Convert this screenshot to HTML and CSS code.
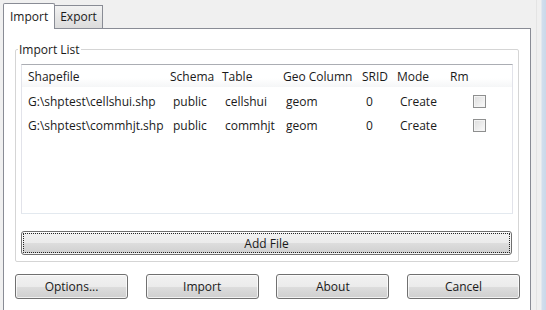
FILE: index.html
```html
<!DOCTYPE html>
<html lang="en">
<head>
  <meta charset="UTF-8">
  <title>Shapefile Import/Export</title>
  <link rel="stylesheet" href="styles.css">
</head>
<body>
  <div class="window">
    <div class="main">
      <!-- tabs -->
      <div class="tabs">
        <div class="tab active">Import</div>
        <div class="tab">Export</div>
      </div>

      <div class="pane">
        <fieldset class="group">
          <legend>Import List</legend>

          <div class="list">
            <div class="lrow head">
              <div class="c c1">Shapefile</div>
              <div class="c">Schema</div>
              <div class="c">Table</div>
              <div class="c">Geo Column</div>
              <div class="c">SRID</div>
              <div class="c">Mode</div>
              <div class="c">Rm</div>
            </div>
            <div class="lrow item">
              <div class="c c1">G:\shptest\cellshui.shp</div>
              <div class="c">public</div>
              <div class="c">cellshui</div>
              <div class="c">geom</div>
              <div class="c srid">0</div>
              <div class="c">Create</div>
              <div class="c rm"><span class="check"></span></div>
            </div>
            <div class="lrow item">
              <div class="c c1">G:\shptest\commhjt.shp</div>
              <div class="c">public</div>
              <div class="c">commhjt</div>
              <div class="c">geom</div>
              <div class="c srid">0</div>
              <div class="c">Create</div>
              <div class="c rm"><span class="check"></span></div>
            </div>
          </div>

          <button class="btn addfile">Add File</button>
        </fieldset>

        <div class="actions">
          <button class="btn">Options...</button>
          <button class="btn">Import</button>
          <button class="btn">About</button>
          <button class="btn">Cancel</button>
        </div>
      </div>
    </div>
    <div class="frame"></div>
  </div>
</body>
</html>
```

FILE: styles.css
```css
:root {
  --bg: #f0f0f0;
  --fg: #1a1a1a;
  --tab-border: #898c95;
  --group-border: #d5d5d5;
  --btn-border: #707070;
}
* {box-sizing: border-box;}
html, body {margin:0;padding:0;}
body {background:var(--bg);color:var(--fg);font-family:"Open Sans","Noto Sans",sans-serif;font-size:12px;width:546px;height:310px;overflow:hidden;}

.window {display:flex;height:310px;}
.main {width:536px;padding:3px 0 0 3px;}
.frame {flex:1;border-left:1px solid #e4e4e4;background:linear-gradient(to right,#f0f0f0 0,#f0f0f0 4px,#d2deed 5px,#c9d8ea 100%);}

/* tabs */
.tabs {display:flex;align-items:flex-end;height:25px;}
.tab {height:23px;line-height:21px;padding:0 5px;border:1px solid var(--tab-border);border-bottom:none;background:linear-gradient(#f3f3f3,#e6e6e6 50%,#dcdcdc);}
.tab + .tab {border-left:none;}
.tab.active {height:26px;margin-bottom:-1px;line-height:25px;padding:0 6px;background:#fff;border-radius:2px 2px 0 0;position:relative;z-index:1;}

.pane {width:528px;height:282px;background:#fff;border:1px solid var(--tab-border);border-bottom:none;padding:12px 11px 0;}

/* group box */
.group {margin:0;padding:6px 5px 6px 5px;border:1px solid var(--group-border);border-radius:2px;}
.group legend {padding:0 1px;margin-left:-3px;line-height:17px;}

.list {height:150px;border:1px solid #a9a9a9;border-color:#abadb3 #e2e3ea #e3e9ef #e2e3ea;background:#fff;}
.lrow {display:grid;grid-template-columns:142px 52px 61px 79px 35px 53px 1fr;align-items:center;}
.lrow .c {padding-left:6px;white-space:nowrap;}
.head {height:22px;background:linear-gradient(#fff,#fff 60%,#f5f6f7);}
.item {height:24px;}
.head + .item {margin-top:2px;}
.item .c {padding-left:9px;}
.item .c1 {padding-left:6px;}
.item .srid {padding-left:10px;}
.item .rm {padding-left:29px;display:flex;}

.check {display:block;width:13px;height:13px;border:1px solid #8e8f8f;background:linear-gradient(135deg,#dcdcdc,#fbfbfb);box-shadow:inset 0 0 0 1px #f4f4f4;}

/* buttons */
.btn {font:inherit;color:var(--fg);height:24px;padding:0;border:1px solid var(--btn-border);border-radius:3px;background:linear-gradient(#f2f2f2 0,#ebebeb 50%,#dddddd 51%,#cfcfcf 100%);box-shadow:inset 0 0 0 1px rgba(255,255,255,0.7);}
.addfile {display:block;width:491px;margin:17px 0 0 0;outline:1px dotted #222;outline-offset:-3px;}

.actions {display:flex;justify-content:space-between;margin-top:12px;width:505px;}
.actions .btn {width:113px;height:25px;}
```
